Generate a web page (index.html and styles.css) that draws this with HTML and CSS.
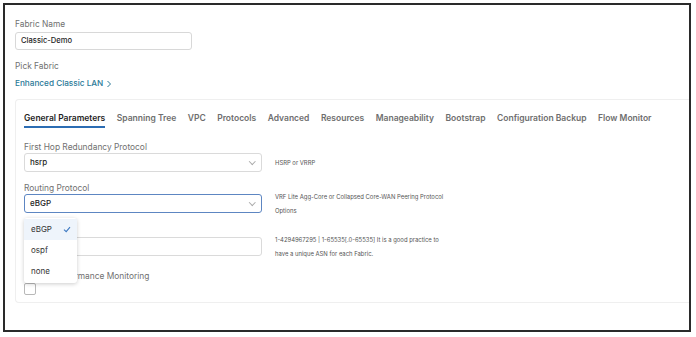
FILE: index.html
```html
<!DOCTYPE html>
<html lang="en">
<head>
    <meta charset="UTF-8">
    <title>Create Fabric</title>
    <link rel="stylesheet" href="styles.css">
</head>
<body>
    <div class="frame">
        <div class="field-label">Fabric Name</div>
        <div class="text-input">Classic-Demo</div>

        <div class="field-label pick">Pick Fabric</div>
        <div class="link">Enhanced Classic LAN
            <svg class="link-chevron" width="6" height="8" viewBox="0 0 6 8"><path d="M1.5 1l3 3-3 3" fill="none" stroke="#2b7a98" stroke-width="1"/></svg>
        </div>

        <div class="card">
            <div class="tabs">
                <span class="tab active">General Parameters</span>
                <span class="tab">Spanning Tree</span>
                <span class="tab">VPC</span>
                <span class="tab">Protocols</span>
                <span class="tab">Advanced</span>
                <span class="tab">Resources</span>
                <span class="tab">Manageability</span>
                <span class="tab">Bootstrap</span>
                <span class="tab">Configuration Backup</span>
                <span class="tab">Flow Monitor</span>
            </div>

            <div class="form">
                <div class="form-field">
                    <div class="field-label">First Hop Redundancy Protocol</div>
                    <div class="form-row">
                        <div class="select">hsrp<span class="caret"></span></div>
                        <div class="help">HSRP or VRRP</div>
                    </div>
                </div>

                <div class="form-field second">
                    <div class="field-label">Routing Protocol</div>
                    <div class="form-row">
                        <div class="select focused">eBGP<span class="caret"></span></div>
                        <div class="help">VRF Lite Agg-Core or Collapsed Core-WAN Peering Protocol<br>Options</div>
                    </div>
                </div>

                <div class="form-field third">
                    <div class="field-label"></div>
                    <div class="form-row">
                        <div class="select plain"></div>
                        <div class="help">1-4294967295 | 1-65535[.0-65535] It is a good practice to<br>have a unique ASN for each Fabric.</div>
                    </div>
                </div>

                <div class="form-field check-field">
                    <div class="field-label">Enable Performance Monitoring</div>
                    <div class="checkbox"></div>
                </div>

                <ul class="menu">
                    <li class="selected">eBGP
                        <svg width="8" height="7" viewBox="0 0 8 7"><path d="M1 3.6l2.2 2.1L7 1.2" fill="none" stroke="#3d79c2" stroke-width="1.1"/></svg>
                    </li>
                    <li>ospf</li>
                    <li>none</li>
                </ul>
            </div>
        </div>
    </div>
</body>
</html>
```

FILE: styles.css
```css
body {
    margin: 0;
    background-color: #ffffff;
    font-family: Inter, 'Noto Sans', sans-serif;
    color: #222;
}
.frame {
    margin: 3px 0 0 3px;
    width: 688px;
    height: 329px;
    border: 2px solid #2a2a2a;
    box-sizing: border-box;
    padding: 14px 0 0 10px;
}
.field-label {
    font-size: 8.4px;
    color: #707070;
    line-height: 11px;
    height: 11px;
    margin-bottom: 2px;
}
.text-input {
    width: 177px;
    height: 18px;
    box-sizing: border-box;
    border: 1px solid #d8d8d8;
    border-radius: 3px;
    font-size: 7.6px;
    font-weight: 500;
    line-height: 16px;
    padding-left: 5px;
    color: #1e1e1e;
}
.pick {
    margin-top: 11px;
    margin-bottom: 0;
}
.link {
    margin-top: 6px;
    font-size: 8.2px;
    font-weight: 500;
    color: #2b7a98;
    line-height: 11px;
    display: flex;
    align-items: center;
    gap: 3px;
}
.link-chevron {
    margin-top: 1px;
}
.card {
    margin-top: 10px;
    height: 204px;
    border: 1px solid #efefef;
    border-right: none;
    border-radius: 4px 0 0 4px;
    box-sizing: border-box;
    padding: 12px 0 0 8px;
}
.tabs {
    display: flex;
    gap: 11.5px;
    height: 17px;
}
.tab {
    font-size: 8.5px;
    font-weight: 600;
    color: #6e6e6e;
    line-height: 12px;
    height: 14px;
}
.tab.active {
    color: #1f1f1f;
    border-bottom: 2.5px solid #2c6db3;
}
.form {
    position: relative;
    margin-top: 13px;
}
.form-field .field-label {
    line-height: 10px;
    height: 10px;
    margin-bottom: 1px;
}
.form-field.second {
    margin-top: 11px;
}
.form-field.third {
    margin-top: 13px;
}
.form-row {
    display: flex;
    align-items: center;
    gap: 13px;
    height: 19px;
}
.select {
    flex-shrink: 0;
    width: 238px;
    height: 19px;
    box-sizing: border-box;
    border: 1px solid #dadada;
    border-radius: 3px;
    font-size: 8px;
    font-weight: 500;
    line-height: 17px;
    padding-left: 5px;
    color: #1e1e1e;
    position: relative;
}
.select.focused {
    border-color: #5d86c2;
}
.caret {
    position: absolute;
    right: 7px;
    top: 5px;
    width: 3.5px;
    height: 3.5px;
    border-right: 1px solid #aaa;
    border-bottom: 1px solid #aaa;
    transform: rotate(45deg);
}
.help {
    font-size: 5.9px;
    color: #555;
    line-height: 13.5px;
    white-space: nowrap;
}
.check-field {
    margin-top: 15px;
}
.check-field .field-label {
    margin-bottom: 2px;
}
.checkbox {
    width: 12px;
    height: 12px;
    border: 1px solid #b8b8b8;
    border-radius: 2px;
    box-sizing: border-box;
}
.menu {
    position: absolute;
    left: 0;
    top: 76px;
    width: 53px;
    margin: 0;
    padding: 1px 0;
    list-style: none;
    background: #fff;
    border-radius: 3px;
    box-shadow: 0 1px 4px rgba(0, 0, 0, 0.2);
}
.menu li {
    height: 21px;
    line-height: 21px;
    font-size: 8px;
    color: #333;
    padding-left: 7px;
    display: flex;
    align-items: center;
    gap: 11px;
}
.menu li.selected {
    background: #eef4fb;
}
```
